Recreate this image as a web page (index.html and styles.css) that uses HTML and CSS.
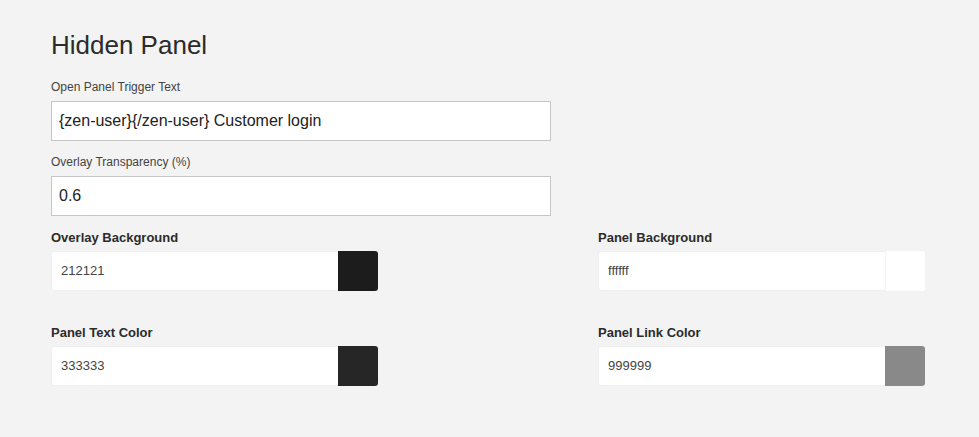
FILE: index.html
```html
<!DOCTYPE html>
<html lang="en">
<head>
<meta charset="utf-8">
<title>Hidden Panel</title>
<link rel="stylesheet" href="styles.css">
</head>
<body>
<main class="page">
  <h1 class="title">Hidden Panel</h1>

  <label class="field-label">Open Panel Trigger Text</label>
  <div class="text-input">{zen-user}{/zen-user} Customer login</div>

  <label class="field-label second">Overlay Transparency (%)</label>
  <div class="text-input">0.6</div>

  <div class="color-grid">
    <div class="color-item">
      <div class="color-label">Overlay Background</div>
      <div class="color-control">
        <div class="color-value">212121</div>
        <div class="swatch swatch-overlay"></div>
      </div>
    </div>
    <div class="color-item">
      <div class="color-label">Panel Background</div>
      <div class="color-control">
        <div class="color-value">ffffff</div>
        <div class="swatch swatch-panel"></div>
      </div>
    </div>
    <div class="color-item">
      <div class="color-label">Panel Text Color</div>
      <div class="color-control">
        <div class="color-value">333333</div>
        <div class="swatch swatch-text"></div>
      </div>
    </div>
    <div class="color-item">
      <div class="color-label">Panel Link Color</div>
      <div class="color-control">
        <div class="color-value">999999</div>
        <div class="swatch swatch-link"></div>
      </div>
    </div>
  </div>
</main>
</body>
</html>
```

FILE: styles.css
```css
html, body {
  margin: 0;
  padding: 0;
  background: #f3f3f3;
}

body {
  font-family: "Liberation Sans", Arial, Helvetica, sans-serif;
  color: #333;
}

.page {
  padding: 30px 0 0 51px;
}

.title {
  margin: 0;
  font-size: 26px;
  line-height: 30px;
  font-weight: normal;
  color: #2b2b2b;
}

.field-label {
  display: block;
  margin-top: 20px;
  font-size: 12px;
  line-height: 15px;
  color: #444;
}

.field-label.second {
  margin-top: 14px;
}

.text-input {
  box-sizing: border-box;
  width: 500px;
  height: 40px;
  margin-top: 6px;
  padding: 0 7px;
  border: 1px solid #c6c6c6;
  background: #fff;
  font-size: 16px;
  line-height: 38px;
  color: #222;
}

.color-grid {
  display: grid;
  grid-template-columns: 327px 327px;
  column-gap: 220px;
  row-gap: 34px;
  margin-top: 14px;
}

.color-label {
  font-size: 13px;
  line-height: 16px;
  font-weight: bold;
  color: #2b2b2b;
}

.color-control {
  display: flex;
  height: 40px;
  margin-top: 5px;
}

.color-value {
  box-sizing: border-box;
  flex: 1;
  padding-left: 9px;
  border: 1px solid #f0f0f0;
  border-right: none;
  border-radius: 3px 0 0 3px;
  background: #fff;
  font-size: 13px;
  line-height: 38px;
  color: #444;
}

.swatch {
  width: 40px;
  border-radius: 0 3px 3px 0;
}

.swatch-overlay { background: #1c1c1c; }
.swatch-panel { background: #fff; border-left: 1px solid #f4f4f4; width: 39px; }
.swatch-text { background: #262626; }
.swatch-link { background: #898989; }
```
